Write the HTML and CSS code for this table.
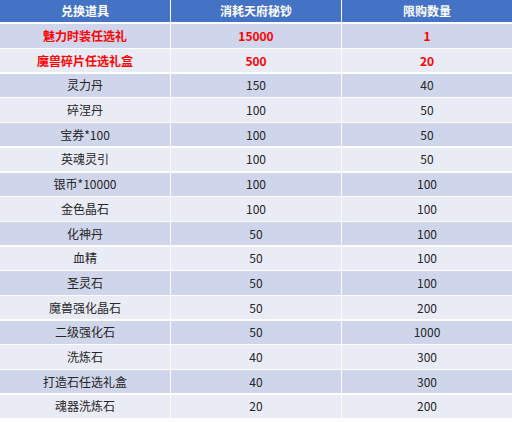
FILE: index.html
```html
<!DOCTYPE html>
<html lang="zh">
<head>
<meta charset="utf-8">
<link rel="stylesheet" href="styles.css">
</head>
<body>
<div class="table">
  <div class="cell head">兑换道具</div>
  <div class="cell head">消耗天府秘钞</div>
  <div class="cell head">限购数量</div>

  <div class="cell odd hot">魅力时装任选礼</div>
  <div class="cell odd hot">15000</div>
  <div class="cell odd hot">1</div>

  <div class="cell even hot">魔兽碎片任选礼盒</div>
  <div class="cell even hot">500</div>
  <div class="cell even hot">20</div>

  <div class="cell odd">灵力丹</div>
  <div class="cell odd">150</div>
  <div class="cell odd">40</div>

  <div class="cell even">碎涅丹</div>
  <div class="cell even">100</div>
  <div class="cell even">50</div>

  <div class="cell odd">宝券*100</div>
  <div class="cell odd">100</div>
  <div class="cell odd">50</div>

  <div class="cell even">英魂灵引</div>
  <div class="cell even">100</div>
  <div class="cell even">50</div>

  <div class="cell odd">银币*10000</div>
  <div class="cell odd">100</div>
  <div class="cell odd">100</div>

  <div class="cell even">金色晶石</div>
  <div class="cell even">100</div>
  <div class="cell even">100</div>

  <div class="cell odd">化神丹</div>
  <div class="cell odd">50</div>
  <div class="cell odd">100</div>

  <div class="cell even">血精</div>
  <div class="cell even">50</div>
  <div class="cell even">100</div>

  <div class="cell odd">圣灵石</div>
  <div class="cell odd">50</div>
  <div class="cell odd">100</div>

  <div class="cell even">魔兽强化晶石</div>
  <div class="cell even">50</div>
  <div class="cell even">200</div>

  <div class="cell odd">二级强化石</div>
  <div class="cell odd">50</div>
  <div class="cell odd">1000</div>

  <div class="cell even">洗炼石</div>
  <div class="cell even">40</div>
  <div class="cell even">300</div>

  <div class="cell odd">打造石任选礼盒</div>
  <div class="cell odd">40</div>
  <div class="cell odd">300</div>

  <div class="cell even">魂器洗炼石</div>
  <div class="cell even">20</div>
  <div class="cell even">200</div>
</div>
</body>
</html>
```
FILE: styles.css
```css
html, body {
  margin: 0;
  padding: 0;
  background: #ffffff;
}
body {
  width: 512px;
  height: 422px;
  overflow: hidden;
  font-family: "Noto Sans CJK SC", "Noto Sans", sans-serif;
  font-size: 12px;
  color: #262626;
}
.table {
  display: grid;
  grid-template-columns: 170px 170px 170px;
  grid-template-rows: 23px repeat(16, 23.3px);
  column-gap: 1px;
  row-gap: 1.4px;
}
.cell {
  display: flex;
  align-items: center;
  justify-content: center;
  line-height: 1;
}
.head {
  background: #4472c4;
  color: #ffffff;
  font-weight: bold;
  margin-bottom: 1px;
}
.odd {
  background: #cfd5ea;
}
.even {
  background: #e9ebf5;
}
.hot {
  color: #ff0000;
  font-weight: bold;
}
```
